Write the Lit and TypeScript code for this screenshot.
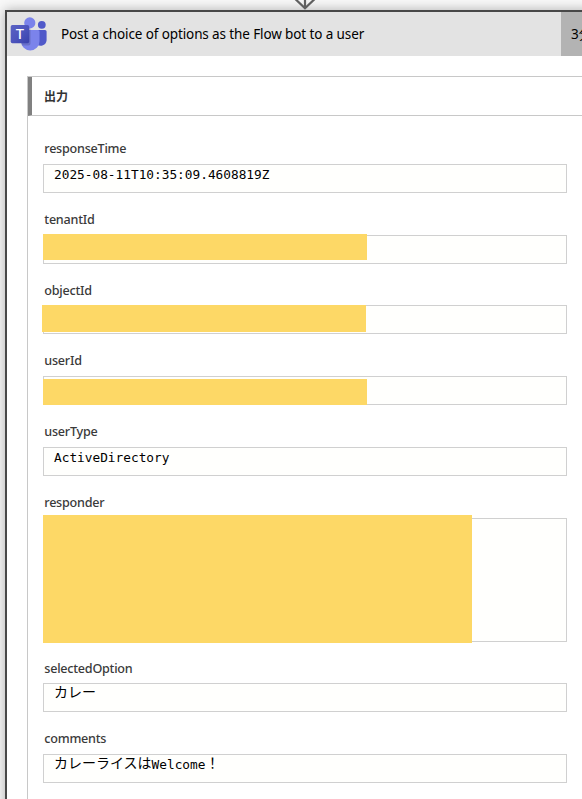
import { LitElement, html, css, nothing } from "lit";
import { customElement, property } from "lit/decorators.js";
import { classMap } from "lit/directives/class-map.js";

interface Mask { x: number; y: number; w: number; h: number }
interface Field { name: string; value?: string; mask?: Mask; tall?: boolean }

const FIELDS: Field[] = [
  { name: "responseTime", value: "2025-08-11T10:35:09.4608819Z" },
  { name: "tenantId", mask: { x: 0, y: -1, w: 324, h: 26 } },
  { name: "objectId", mask: { x: -1, y: 0, w: 324, h: 27 } },
  { name: "userId", mask: { x: 0, y: 3, w: 324, h: 26 } },
  { name: "userType", value: "ActiveDirectory" },
  { name: "responder", tall: true, mask: { x: 0, y: -3, w: 429, h: 128 } },
  { name: "selectedOption", value: "カレー" },
  { name: "comments", value: "カレーライスはWelcome！" },
];

@customElement("teams-logo")
export class TeamsLogo extends LitElement {
  static styles = css`
    :host { display: block; width: 38px; height: 36px; }
    svg { display: block; }
    .letter { font: 500 14.7px "Noto Sans", sans-serif; fill: #fff; }
  `;
  render() {
    return html`<svg width="38" height="36" viewBox="0 0 38 36">
      <defs>
        <linearGradient id="tile" x1="0" y1="0" x2="1" y2="1">
          <stop offset="0" stop-color="#5a62c3"></stop>
          <stop offset=".5" stop-color="#4d55bd"></stop>
          <stop offset="1" stop-color="#3940ab"></stop>
        </linearGradient>
      </defs>
      <circle cx="31.8" cy="8.8" r="3.9" fill="#5059c9"></circle>
      <path d="M27 14h8a1.6 1.6 0 0 1 1.6 1.6V24.5a6 6 0 0 1-9.6 4z" fill="#5059c9"></path>
      <circle cx="19.8" cy="6.9" r="5.6" fill="#7b83eb"></circle>
      <path d="M12 14h16a1.5 1.5 0 0 1 1.5 1.5V25.3a9.2 9.2 0 0 1-18.5 0V15z" fill="#7b83eb"></path>
      <path d="M11 12h8a1.5 1.5 0 0 1 1.5 1.5V27.5a2 2 0 0 1-2 2h-6.2A10 10 0 0 1 11 26z" fill="#000" opacity=".15"></path>
      <rect x=".7" y="9" width="18.5" height="18.2" rx="1.7" fill="url(#tile)"></rect>
      <text class="letter" x="10" y="23.2" text-anchor="middle">T</text>
    </svg>`;
  }
}

@customElement("output-field")
export class OutputField extends LitElement {
  @property({ attribute: false }) field!: Field;
  static styles = css`
    :host { display: block; }
    .label {
      height: 21px; line-height: 21.4px; margin: 0 0 4.75px 1.3px; color: #3a3a3a;
      font-family: "Noto Sans", sans-serif; font-size: 12.6px; font-weight: 550; white-space: nowrap;
      letter-spacing: -.24px;
    }
    .box {
      position: relative; box-sizing: border-box; height: 29px; padding: 0 10px;
      border: 1px solid #d0d0d0; background: #fffffd; color: #000;
      font-family: "Noto Sans CJK JP", sans-serif; font-size: 14px; line-height: 14px; white-space: nowrap;
    }
    .tall { height: 124px; }
    .latin { font-family: "DejaVu Sans Mono", monospace; font-size: 12.79px; position: relative; top: 1px; }
    .mask { position: absolute; background: #fdd866; }
  `;
  private mask(m: Mask) {
    return html`<div class="mask" style="left:${m.x - 1}px;top:${m.y - 1}px;width:${m.w}px;height:${m.h}px"></div>`;
  }
  render() {
    const { name, value = "", mask, tall = false } = this.field;
    const runs = value.match(/[\x20-\x7e]+|[^\x20-\x7e]+/g) ?? [];
    return html`<div class="label">${name}</div>
      <div class=${classMap({ box: true, tall })}>${runs.map((r) =>
        r.charCodeAt(0) < 128 ? html`<span class="latin">${r}</span>` : r)}${mask ? this.mask(mask) : nothing}</div>`;
  }
}

@customElement("app-root")
export class AppRoot extends LitElement {
  static styles = css`
    :host {
      display: block; box-sizing: border-box; width: 100%; height: 799px; overflow: hidden;
      padding: 10px 0 0 5px; background: #f8f8f8; position: relative;
    }
    .arrow { position: absolute; left: 294px; top: 0; display: block; }
    .card {
      box-sizing: border-box; width: 760px; height: 900px; background: #fff;
      border: 2px solid #484848; box-shadow: 0 0 11px rgba(0, 0, 0, .3);
    }
    .head { display: flex; align-items: center; height: 44px; background: #e3e3e3; }
    .logo { margin: 0 0 0 3px; }
    .title {
      width: 513px; margin-left: 13px; color: #000; white-space: nowrap;
      font-family: "Noto Sans", sans-serif; font-size: 13.5px; line-height: 20px; letter-spacing: -.115px;
    }
    .time {
      flex: none; width: 80px; margin-left: -13px; padding-left: 10px; background: #b3b3b3; color: #000;
      font-family: "Noto Sans", "Noto Sans CJK JP", sans-serif; font-size: 13.5px; line-height: 44px;
      box-sizing: border-box; height: 44px; white-space: nowrap;
    }
    .panel { margin: 20px 20px 0; border: 1px solid #c8c8c8; height: 800px; }
    .section {
      height: 38px; line-height: 38px; border-left: 4px solid #808080; border-bottom: 1px solid #c8c8c8;
      padding-left: 12px; color: #333; font-family: "Noto Sans CJK JP", sans-serif; font-size: 12px; font-weight: 700;
    }
    .fields { display: grid; gap: 16px; width: 524px; padding: 22.05px 0 0 15px; }
  `;
  render() {
    return html`
      <div class="card">
        <div class="head">
          <teams-logo class="logo"></teams-logo>
          <div class="title">Post a choice of options as the Flow bot to a user</div>
          <div class="time">3分</div>
        </div>
        <div class="panel">
          <div class="section">出力</div>
          <div class="fields">${FIELDS.map((f) => html`<output-field .field=${f}></output-field>`)}</div>
        </div>
      </div>
      <svg class="arrow" width="22" height="10" viewBox="0 0 22 10">
        <path d="M11 0v8M1.5 -.8L11 8.2L20.5 -.8" fill="none" stroke="#606060" stroke-width="2.2"></path>
      </svg>`;
  }
}
